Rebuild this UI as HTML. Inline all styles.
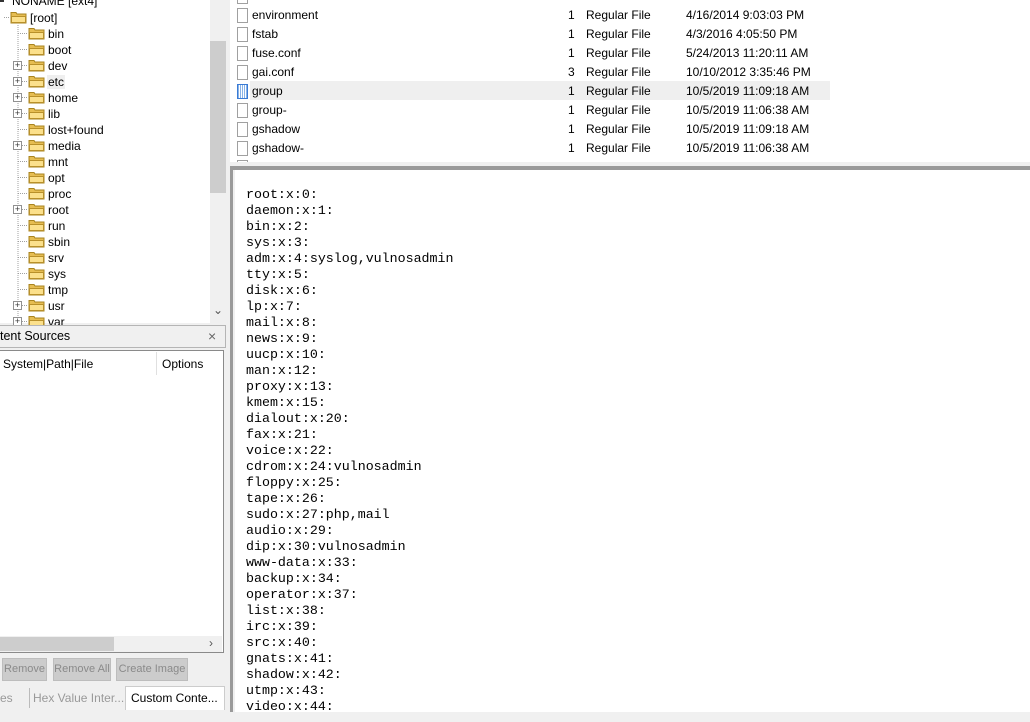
<!DOCTYPE html>
<html><head><meta charset="utf-8"><style>
*{margin:0;padding:0;box-sizing:border-box}
body{width:1030px;height:722px;overflow:hidden;background:#f0f0f0;font-family:"Liberation Sans",sans-serif;font-size:12px;color:#000;position:relative}
.a{position:absolute;white-space:nowrap}
.fold{position:absolute;width:17px;height:14px}
.tr{position:absolute;font-size:12px}
.pl{position:absolute;width:9px;height:9px;border:1px solid #919191;background:#fff;font-size:9px;line-height:7px;text-align:center;color:#333}
.fi{position:absolute;width:11px;height:15px;border:1px solid #a0a0a0;background:#fff}
.fr{position:absolute;font-size:12px}
.btn{position:absolute;top:658px;height:23px;background:#cccccc;border:1px solid #bdbdbd;color:#8a8a8a;font-size:11px;line-height:21px;text-align:center;white-space:nowrap;overflow:hidden}
pre{font-family:"Liberation Mono",monospace;font-size:13.3px;line-height:16px;color:#000}
</style></head><body>
<div class="a" style="left:0;top:0;width:226px;height:323px;background:#fff"></div>
<div class="a" style="left:210px;top:0;width:16px;height:323px;background:#f0f0f0"></div>
<div class="a" style="left:210px;top:41px;width:16px;height:152px;background:#cdcdcd"></div>
<div class="a" style="left:213px;top:303px;font-size:12px;color:#555">&#8964;</div>
<div class="tr" style="left:12px;top:-6px">NONAME [ext4]</div>
<div class="a" style="left:0;top:-4px;width:4px;height:6px;background:#333"></div>
<svg class="a" style="left:0;top:0" width="40" height="323">
<g stroke="#a0a0a0" stroke-dasharray="1,1" fill="none">
<line x1="18" y1="25" x2="18" y2="323"/>
<line x1="4" y1="17.5" x2="10" y2="17.5"/>
</g></svg>
<div id="tree"></div>
<div class="a" style="left:0;top:325px;width:226px;height:23px;background:#f0f0f0;border:1px solid #b5b5b5;border-left:none"></div>
<div class="a" style="left:0;top:329px;font-size:12.5px">tent Sources</div>
<div class="a" style="left:208px;top:328px;font-size:14px;color:#666">×</div>
<div class="a" style="left:0;top:350px;width:224px;height:303px;background:#fff;border:1px solid #8a8a8a;border-left:none"></div>
<div class="a" style="left:3px;top:357px">System|Path|File</div>
<div class="a" style="left:156px;top:352px;width:1px;height:23px;background:#e0e0e0"></div>
<div class="a" style="left:162px;top:357px">Options</div>
<div class="a" style="left:0;top:636px;width:222px;height:16px;background:#f0f0f0"></div>
<div class="a" style="left:0;top:637px;width:114px;height:14px;background:#cdcdcd"></div>
<div class="a" style="left:209px;top:636px;color:#555;font-size:12px">&#8250;</div>
<div class="btn" style="left:2px;width:45px">Remove</div>
<div class="btn" style="left:53px;width:58px">Remove All</div>
<div class="btn" style="left:116px;width:72px">Create Image</div>
<div class="a" style="left:0;top:691px;color:#999">es</div>
<div class="a" style="left:29px;top:688px;width:1px;height:20px;background:#bbb"></div>
<div class="a" style="left:33px;top:691px;color:#999">Hex Value Inter...</div>
<div class="a" style="left:125px;top:686px;width:100px;height:24px;background:#fff;border:1px solid #ccc;border-bottom:none"></div>
<div class="a" style="left:131px;top:691px">Custom Conte...</div>
<div class="a" style="left:230px;top:0;width:800px;height:162px;background:#fff"></div>
<div class="a" style="left:250px;top:81px;width:580px;height:19px;background:#efefef"></div>
<div id="files"></div>
<div class="a" style="left:230px;top:162px;width:800px;height:8px;background:#f0f0f0"></div>
<div class="a" style="left:230px;top:166px;width:800px;height:3px;background:#9a9a9a"></div>
<div class="a" style="left:230px;top:169px;width:800px;height:543px;background:#fff;border-left:3px solid #9a9a9a;border-top:1px solid #9a9a9a"></div>
<div class="a" style="left:233px;top:170px;width:2px;height:542px;background:#f0f0f0"></div>
<div class="a" style="left:226px;top:0;width:4px;height:722px;background:#f0f0f0"></div>
<div class="a" style="left:246px;top:187px;height:523px;overflow:hidden"><pre>root:x:0:
daemon:x:1:
bin:x:2:
sys:x:3:
adm:x:4:syslog,vulnosadmin
tty:x:5:
disk:x:6:
lp:x:7:
mail:x:8:
news:x:9:
uucp:x:10:
man:x:12:
proxy:x:13:
kmem:x:15:
dialout:x:20:
fax:x:21:
voice:x:22:
cdrom:x:24:vulnosadmin
floppy:x:25:
tape:x:26:
sudo:x:27:php,mail
audio:x:29:
dip:x:30:vulnosadmin
www-data:x:33:
backup:x:34:
operator:x:37:
list:x:38:
irc:x:39:
src:x:40:
gnats:x:41:
shadow:x:42:
utmp:x:43:
video:x:44:</pre></div>
<div class="a" style="left:0;top:712px;width:1030px;height:10px;background:#f0f0f0"></div>
<script>
var names=["[root]","bin","boot","dev","etc","home","lib","lost+found","media","mnt","opt","proc","root","run","sbin","srv","sys","tmp","usr","var"];
var plus={dev:1,etc:1,home:1,lib:1,media:1,root:1,usr:1,"var":1};
var h="";
names.forEach(function(n,i){
 var y=17+16*i, x=i==0?10:28;
 h+='<svg class="fold" style="left:'+x+'px;top:'+(y-7)+'px" width="17" height="14"><path d="M1 2.5h5l1 1.5h9v9H1z" fill="#e6bd52" stroke="#a88420"/><path d="M1.5 6.5h14v6h-14z" fill="#fbe08c" stroke="#b8902a"/></svg>';
 if(i>0){h+='<svg class="a" style="left:18px;top:'+(y)+'px" width="10" height="1"><line x1="0" y1="0.5" x2="10" y2="0.5" stroke="#a0a0a0" stroke-dasharray="1,1"/></svg>';}
 if(plus[n]) h+='<div class="pl" style="left:13px;top:'+(y-4)+'px">+</div>';
 var bg=n=="etc"?"background:#efefef;":"";
 h+='<div class="tr" style="'+bg+'left:'+(x+19)+'px;top:'+(y-6)+'px;padding:0 1px">'+n+'</div>';
});
document.getElementById("tree").innerHTML=h;
var f=[["","","",""],["environment","1","Regular File","4/16/2014 9:03:03 PM"],["fstab","1","Regular File","4/3/2016 4:05:50 PM"],["fuse.conf","1","Regular File","5/24/2013 11:20:11 AM"],["gai.conf","3","Regular File","10/10/2012 3:35:46 PM"],["group","1","Regular File","10/5/2019 11:09:18 AM"],["group-","1","Regular File","10/5/2019 11:06:38 AM"],["gshadow","1","Regular File","10/5/2019 11:09:18 AM"],["gshadow-","1","Regular File","10/5/2019 11:06:38 AM"],["","","",""]];
h="";
f.forEach(function(r,i){
 var y=-13+19*i;
 h+='<div class="fi" style="left:237px;top:'+(y+2)+'px;'+(r[0]=="group"?"border-color:#3a7bd5;background:repeating-linear-gradient(90deg,#8ab4e8 0 1px,#fff 1px 2px)":"")+'"></div>';
 h+='<div class="fr" style="left:252px;top:'+(y+2)+'px">'+r[0]+'</div><div class="fr" style="left:568px;top:'+(y+2)+'px">'+r[1]+'</div><div class="fr" style="left:586px;top:'+(y+2)+'px">'+r[2]+'</div><div class="fr" style="left:686px;top:'+(y+2)+'px">'+r[3]+'</div>';
});
document.getElementById("files").innerHTML=h;
</script>
</body></html>
